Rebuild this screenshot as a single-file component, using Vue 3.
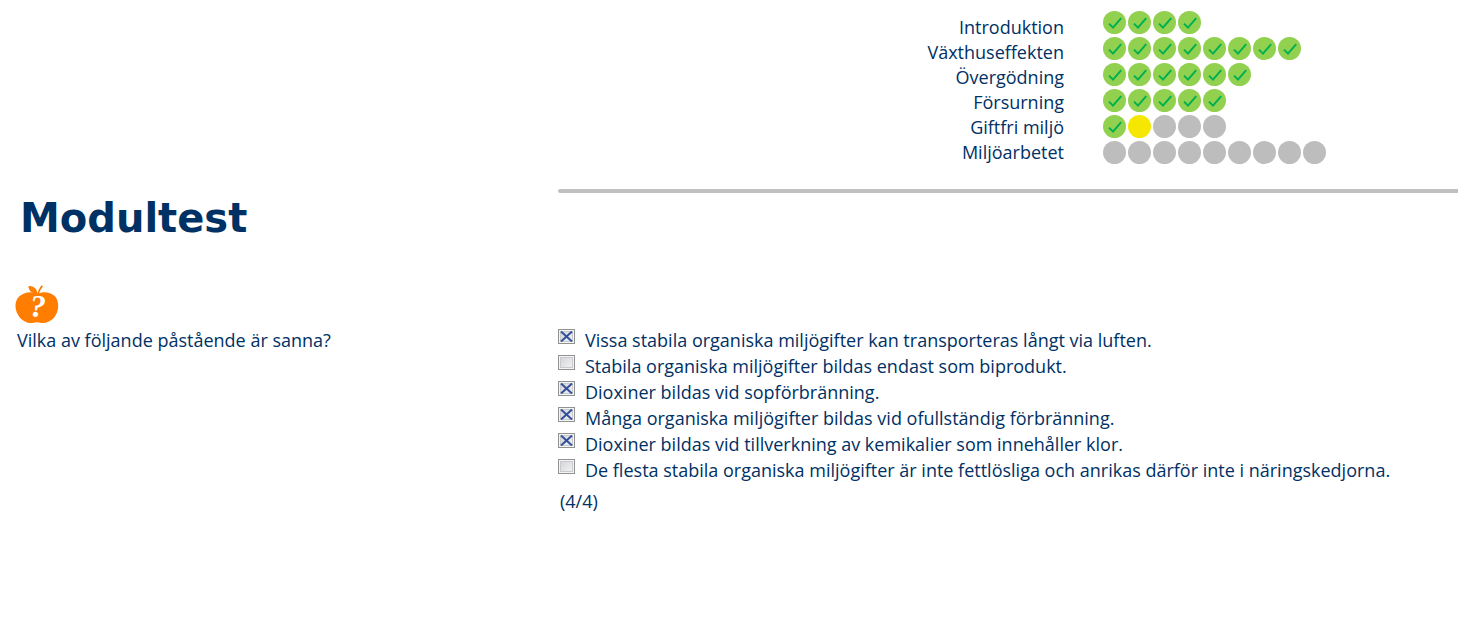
<script setup>
import { ref } from 'vue'

const modules = [
  { name: 'Introduktion', done: 4, current: 0, left: 0 },
  { name: 'Växthuseffekten', done: 8, current: 0, left: 0 },
  { name: 'Övergödning', done: 6, current: 0, left: 0 },
  { name: 'Försurning', done: 5, current: 0, left: 0 },
  { name: 'Giftfri miljö', done: 1, current: 1, left: 3 },
  { name: 'Miljöarbetet', done: 0, current: 0, left: 9 },
].map((m) => ({
  name: m.name,
  steps: [
    ...Array(m.done).fill('done'),
    ...Array(m.current).fill('current'),
    ...Array(m.left).fill('left'),
  ],
}))

const options = ref([
  { text: 'Vissa stabila organiska miljögifter kan transporteras långt via luften.', checked: true },
  { text: 'Stabila organiska miljögifter bildas endast som biprodukt.', checked: false },
  { text: 'Dioxiner bildas vid sopförbränning.', checked: true },
  { text: 'Många organiska miljögifter bildas vid ofullständig förbränning.', checked: true },
  { text: 'Dioxiner bildas vid tillverkning av kemikalier som innehåller klor.', checked: true },
  { text: 'De flesta stabila organiska miljögifter är inte fettlösliga och anrikas därför inte i näringskedjorna.', checked: false },
])
</script>

<template>
  <div class="page">
    <header class="progress">
      <ul class="names">
        <li v-for="m in modules" :key="m.name">{{ m.name }}</li>
      </ul>
      <ul class="tracks">
        <li v-for="m in modules" :key="m.name" class="track">
          <svg v-for="(s, i) in m.steps" :key="i" class="step" :class="s" viewBox="0 0 23 23">
            <circle cx="11.5" cy="11.5" r="11.5" />
            <path v-if="s === 'done'" d="M6 12.6 L10 16.6 L18.2 7.2" />
          </svg>
        </li>
      </ul>
    </header>

    <div class="columns title-row">
      <h1>Modultest</h1>
      <hr />
    </div>

    <main class="columns">
      <section class="question">
        <svg class="apple" viewBox="0 0 44 39" aria-hidden="true">
          <path d="M21 8.500 C17 6.800 13 7 9 8.400 C3.500 10.500 0.500 15 0.500 21 C0.500 30 8 38 15.500 38 C18 38 19.500 37.200 22 37.200 C24.500 37.200 25.500 38 28 38 C36.500 38 43.200 30 43.200 21 C43.200 15 41 10.500 35.500 8.400 C31.500 7 27.500 6.800 23.500 8.500 Z" />
          <path d="M13.500 1 C18.500 1 22.300 3.500 22.300 9 C17 8.500 13.500 6 13.500 1 Z" />
          <path d="M22 9.500 C23 6 24.500 3 26.600 0.300 L28 1.300 C26 4 24.500 6.500 23.800 9.500 Z" />
          <text x="23" y="32" text-anchor="middle">?</text>
        </svg>
        <p>Vilka av följande påstående är sanna?</p>
      </section>
      <section class="answers">
        <label v-for="o in options" :key="o.text" class="option">
          <input v-model="o.checked" type="checkbox" />
          <span class="box">
            <svg v-if="o.checked" viewBox="0 0 13 11" aria-hidden="true">
              <path d="M1 0.500 L12 10.500 M12 0.500 L1 10.500" />
            </svg>
          </span>
          <span>{{ o.text }}</span>
        </label>
        <p class="score">(4/4)</p>
      </section>
    </main>
  </div>
</template>

<style>
body {
  background: #fff;
}
</style>

<style scoped>
.page {
  color: #003164;
  font-family: "Open Sans", "Noto Sans", sans-serif;
  font-size: 18px;
  line-height: 26px;
  padding-top: 11px;
}
ul,
p,
h1 {
  margin: 0;
  padding: 0;
}
ul {
  list-style: none;
}
.progress {
  display: flex;
  justify-content: flex-end;
  gap: 39px;
}
.names {
  padding-top: 4px;
  text-align: right;
  line-height: 25px;
}
.tracks {
  width: 355px;
}
.track {
  display: flex;
  gap: 2px;
  height: 26px;
}
.step {
  width: 23px;
  height: 23px;
}
.done circle {
  fill: #92d050;
}
.done path {
  fill: none;
  stroke: #00b050;
  stroke-width: 2;
}
.current circle {
  fill: #f5e700;
}
.left circle {
  fill: #bdbdbd;
}
.columns {
  display: grid;
  grid-template-columns: 558px minmax(0, 1fr);
}
.title-row {
  padding-top: 22px;
}
h1 {
  padding: 3px 20px;
  font-family: "DejaVu Sans", sans-serif;
  font-size: 40px;
  line-height: 52px;
  font-weight: bold;
}
hr {
  width: 100%;
  height: 4px;
  margin: 0;
  border: 0;
  border-radius: 2px 0 0 2px;
  background: #c0c0c0;
}
main {
  padding-top: 38px;
}
.question {
  padding-left: 15px;
}
.question p {
  padding: 3px 2px;
}
.apple {
  display: block;
  width: 44px;
  height: 39px;
  fill: #ff7d00;
}
.apple text {
  fill: #fff;
  font: italic bold 32px "Liberation Serif", serif;
}
.answers {
  padding-top: 42px;
}
.option {
  display: flex;
  gap: 10px;
}
.option input {
  position: absolute;
  opacity: 0;
}
.option input:focus-visible + .box {
  outline: 2px solid #34509b;
}
.box {
  flex: none;
  box-sizing: border-box;
  width: 17px;
  height: 15px;
  margin-top: 2px;
  border: 1px solid #929292;
  background: linear-gradient(135deg, #cfd1d5, #f6f6f6);
  box-shadow: inset 0 0 0 1px #f4f4f4, inset 0 0 0 2px #c8cacd;
}
.box svg {
  display: block;
  width: 13px;
  height: 11px;
  margin: 1px;
}
.box path {
  fill: none;
  stroke: #34509b;
  stroke-width: 2;
}
.score {
  padding: 5px 2px;
}
</style>
